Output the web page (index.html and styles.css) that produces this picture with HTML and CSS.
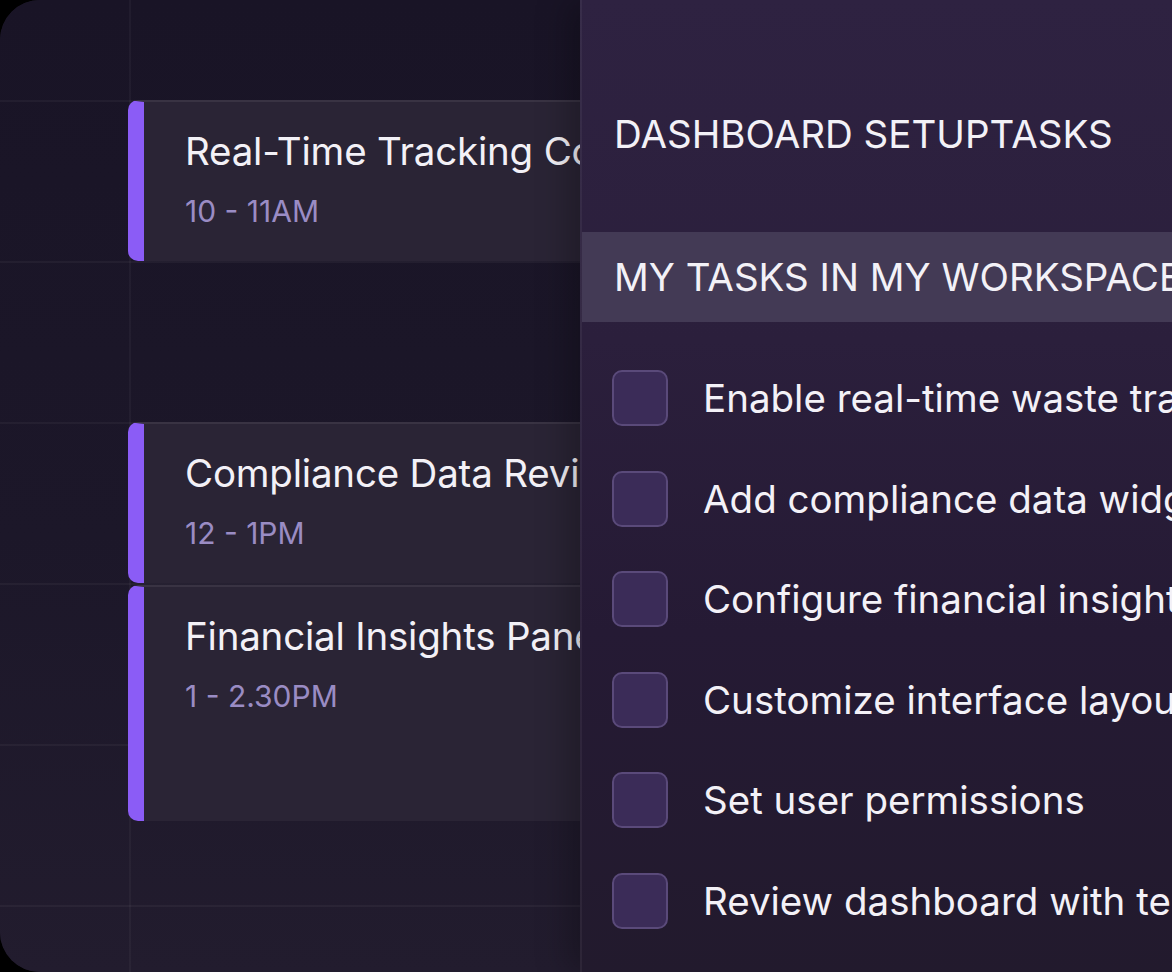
FILE: index.html
```html
<!DOCTYPE html>
<html lang="en">
<head>
  <meta charset="UTF-8" />
  <title>Dashboard Setup</title>
  <link rel="stylesheet" href="styles.css">
</head>
<body>
  <main class="frame">
    <section class="calendar">
      <div class="event event-one">
        <div class="event-title">Real-Time Tracking Configuration</div>
        <div class="event-time">10 - 11AM</div>
      </div>
      <div class="event event-two">
        <div class="event-title">Compliance Data Review</div>
        <div class="event-time">12 - 1PM</div>
      </div>
      <div class="event event-three">
        <div class="event-title">Financial Insights Panel</div>
        <div class="event-time">1 - 2.30PM</div>
      </div>
    </section>

    <section class="panel">
      <h1 class="panel-title">DASHBOARD SETUPTASKS</h1>
      <h2 class="panel-band">MY TASKS IN MY WORKSPACE</h2>
      <ul class="tasks">
        <li class="task"><span class="check"></span>Enable real-time waste tracking</li>
        <li class="task"><span class="check"></span>Add compliance data widgets</li>
        <li class="task"><span class="check"></span>Configure financial insights</li>
        <li class="task"><span class="check"></span>Customize interface layout</li>
        <li class="task"><span class="check"></span>Set user permissions</li>
        <li class="task"><span class="check"></span>Review dashboard with team</li>
      </ul>
    </section>
  </main>
</body>
</html>
```

FILE: styles.css
```css
:root {
  --color-frame: #1b1627;
  --color-line: rgb(255 255 255 / 0.035);
  --color-card: #2a2435;
  --color-accent: #8b5cf6;
  --color-text: #f3f1f7;
  --color-muted: #9a8cc4;
  --color-band: #433a55;
  --color-check: #3b2c58;
  --color-check-border: #5a4a7a;
}

html, body {
  margin: 0;
  background: #000;
}

body {
  font-family: Inter, "Noto Sans", sans-serif;
  color: var(--color-text);
}

.frame {
  width: 1172px;
  height: 972px;
  display: flex;
  border-radius: 40px 0 0 40px;
  overflow: hidden;
  background: var(--color-frame);
}

/* calendar behind the panel */
.calendar {
  width: 580px;
  flex-shrink: 0;
  display: grid;
  grid-template-columns: 128px 1fr;
  grid-template-rows: 100px repeat(11, 80.5px) 1fr;
  background:
    linear-gradient(to right, transparent 129px, var(--color-line) 129px, var(--color-line) 131px, transparent 131px) no-repeat,
    linear-gradient(to bottom, rgb(255 255 255 / 0.04) 0, rgb(255 255 255 / 0.04) 2px, transparent 2px) 0 100px / 100% 161px repeat-y,
    linear-gradient(to bottom, #191426 0%, #1c1729 55%, #221c2e 100%);
}

.event {
  grid-column: 2;
  background: var(--color-card);
  border-left: 16px solid var(--color-accent);
  border-top: 2px solid rgb(255 255 255 / 0.07);
  border-radius: 10px 0 0 10px;
  padding: 26px 0 0 41px;
  overflow: hidden;
  white-space: nowrap;
  box-sizing: border-box;
}

.event-one { grid-row: 2 / 4; }
.event-two { grid-row: 6 / 8; }
.event-three { grid-row: 8 / 11; margin: 2px 0 4px; }

.event-title {
  font-size: 38.5px;
  line-height: 46px;
  letter-spacing: -0.2px;
}

.event-time {
  margin-top: 19px;
  font-size: 30px;
  line-height: 36px;
  color: var(--color-muted);
}

/* task panel */
.panel {
  flex: 1;
  min-width: 0;
  border-left: 2px solid rgb(255 255 255 / 0.05);
  box-shadow: -12px 0 30px rgb(0 0 0 / 0.25);
  background: linear-gradient(to bottom, #2e2241 0%, #2b1f3c 35%, #251a34 65%, #221a2d 100%);
  white-space: nowrap;
  overflow: hidden;
}

.panel-title,
.panel-band {
  margin: 0;
  font-size: 38.5px;
  font-weight: 400;
}

.panel-title {
  height: 232px;
  box-sizing: border-box;
  padding: 36px 0 0 32px;
  display: flex;
  align-items: center;
}

.panel-band {
  height: 90px;
  padding-left: 32px;
  display: flex;
  align-items: center;
  background: var(--color-band);
}

.tasks {
  list-style: none;
  margin: 0;
  padding: 48px 0 0 30px;
  display: flex;
  flex-direction: column;
  gap: 44.6px;
}

.task {
  display: flex;
  align-items: center;
  height: 56px;
  font-size: 38.5px;
}

.check {
  width: 56px;
  height: 56px;
  flex-shrink: 0;
  box-sizing: border-box;
  margin-right: 35px;
  background: var(--color-check);
  border: 2px solid var(--color-check-border);
  border-radius: 10px;
}
```
